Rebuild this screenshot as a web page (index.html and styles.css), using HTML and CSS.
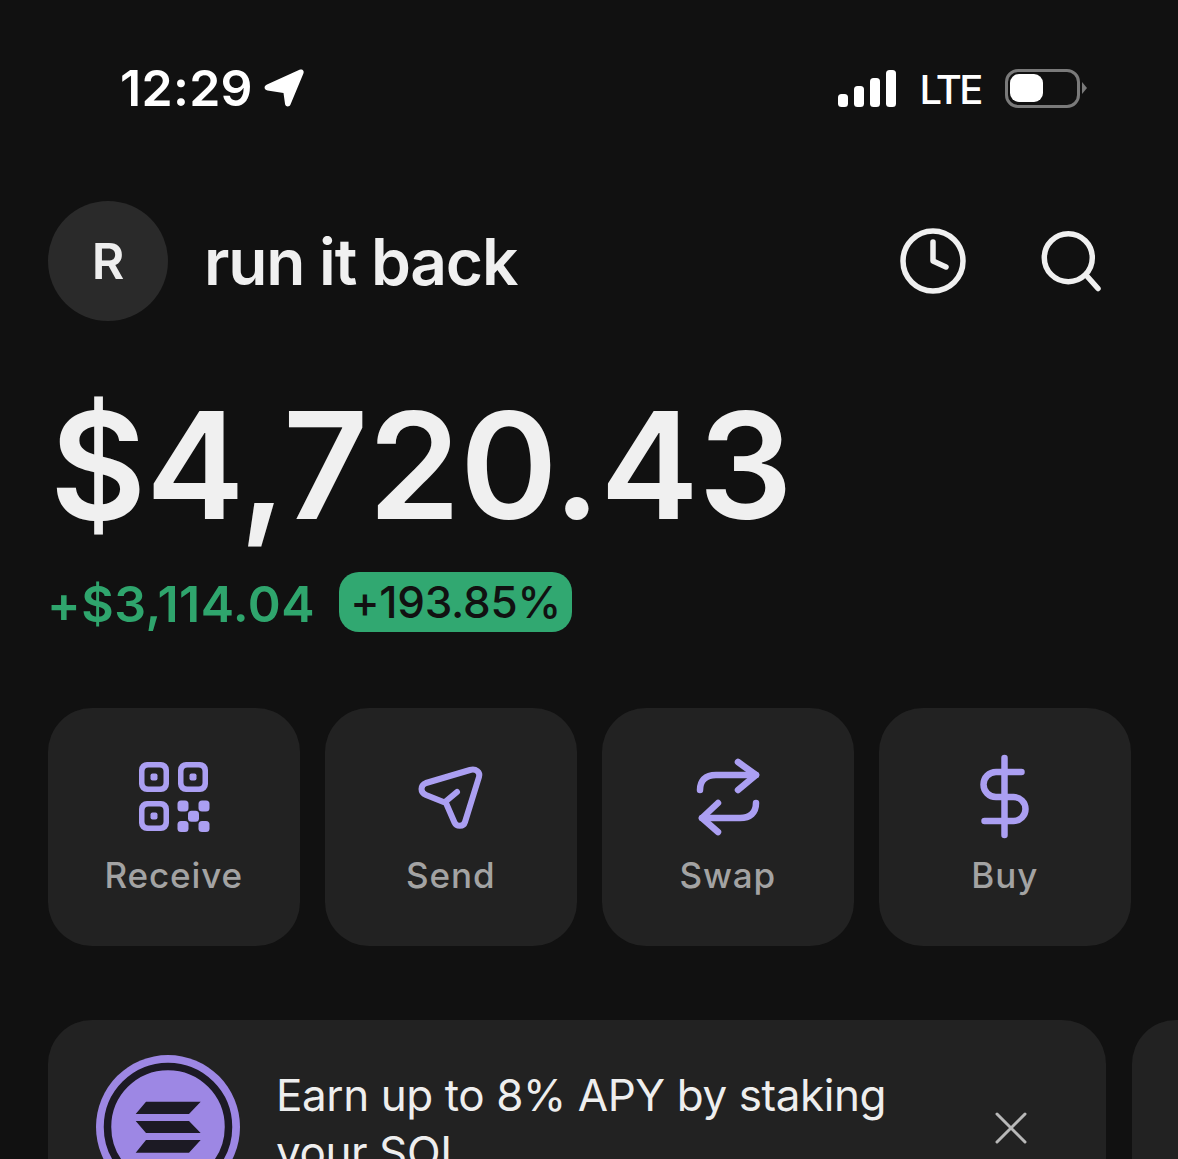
FILE: index.html
```html
<!DOCTYPE html>
<html lang="en">
<head>
    <meta charset="UTF-8">
    <title>Wallet</title>
    <link rel="stylesheet" href="styles.css">
</head>
<body>

<div class="status-bar">
    <div class="status-left">
        <span class="time">12:29</span>
        <svg class="location" width="42" height="42" viewBox="0 0 42 42"><path d="M36.500 2.700 C39.500 1.600 41.500 3.800 40.400 6.400 L27.500 37.500 C26.300 40.500 22.300 40 22 36.800 L20.500 26 L4.500 23.500 C1 22.800 0.500 19 4 17.500 Z" fill="#fff"/></svg>
    </div>
    <div class="status-right">
        <div class="signal">
            <span class="bar bar-1"></span>
            <span class="bar bar-2"></span>
            <span class="bar bar-3"></span>
            <span class="bar bar-4"></span>
        </div>
        <span class="network">LTE</span>
        <div class="battery">
            <div class="battery-body"><div class="battery-level"></div></div>
            <div class="battery-cap"></div>
        </div>
    </div>
</div>

<div class="header">
    <div class="avatar">R</div>
    <div class="account-name">run it back</div>
    <div class="header-icons">
        <svg width="68" height="68" viewBox="0 0 68 68" fill="none" stroke="#f0f0f0" stroke-width="5.500" stroke-linecap="round" stroke-linejoin="round">
            <circle cx="34" cy="34" r="30"/>
            <path d="M34 15 V34 L47 40"/>
        </svg>
        <svg width="64" height="64" viewBox="0 0 64 64" fill="none" stroke="#f0f0f0" stroke-width="5.500" stroke-linecap="round">
            <circle cx="28.300" cy="28.700" r="24"/>
            <path d="M46 46 L58 59.500"/>
        </svg>
    </div>
</div>

<div class="balance">$4,720.43</div>

<div class="change">
    <span class="change-amount">+$3,114.04</span>
    <span class="change-pill">+193.85%</span>
</div>

<div class="actions">
    <div class="action">
        <svg class="action-icon" width="72" height="72" viewBox="0 0 72 72" fill="#ab9ff2">
            <path fill-rule="evenodd" d="M9 1 H23 A8 8 0 0 1 31 9 V23 A8 8 0 0 1 23 31 H9 A8 8 0 0 1 1 23 V9 A8 8 0 0 1 9 1 Z M10.500 6.500 A4 4 0 0 0 6.500 10.500 V21.500 A4 4 0 0 0 10.500 25.500 H21.500 A4 4 0 0 0 25.500 21.500 V10.500 A4 4 0 0 0 21.500 6.500 Z"/>
            <rect x="12.500" y="12.500" width="7" height="7" rx="2"/>
            <path fill-rule="evenodd" d="M48 1 H62 A8 8 0 0 1 70 9 V23 A8 8 0 0 1 62 31 H48 A8 8 0 0 1 40 23 V9 A8 8 0 0 1 48 1 Z M49.500 6.500 A4 4 0 0 0 45.500 10.500 V21.500 A4 4 0 0 0 49.500 25.500 H60.500 A4 4 0 0 0 64.500 21.500 V10.500 A4 4 0 0 0 60.500 6.500 Z"/>
            <rect x="51.500" y="12.500" width="7" height="7" rx="2"/>
            <path fill-rule="evenodd" d="M9 40 H23 A8 8 0 0 1 31 48 V62 A8 8 0 0 1 23 70 H9 A8 8 0 0 1 1 62 V48 A8 8 0 0 1 9 40 Z M10.500 45.500 A4 4 0 0 0 6.500 49.500 V60.500 A4 4 0 0 0 10.500 64.500 H21.500 A4 4 0 0 0 25.500 60.500 V49.500 A4 4 0 0 0 21.500 45.500 Z"/>
            <rect x="12.500" y="51.500" width="7" height="7" rx="2"/>
            <rect x="39.500" y="39.500" width="11" height="11" rx="3.500"/>
            <rect x="60.500" y="39.500" width="11" height="11" rx="3.500"/>
            <rect x="50" y="49.700" width="11" height="11" rx="3.500"/>
            <rect x="39.500" y="60" width="11" height="11" rx="3.500"/>
            <rect x="60.500" y="60" width="11" height="11" rx="3.500"/>
        </svg>
        <span class="action-label">Receive</span>
    </div>
    <div class="action">
        <svg class="action-icon" width="72" height="72" viewBox="0 0 72 72" fill="none" stroke="#ab9ff2" stroke-width="6" stroke-linecap="round" stroke-linejoin="round">
            <path d="M11 22 L55 9 C61 7.500 65.500 11 64 16 L50 61 C48.500 66 41.500 66 39.500 61.500 L31 42 L11 34 C5 31.500 5 24.500 11 22 Z"/>
            <path d="M30 41 L42 31"/>
        </svg>
        <span class="action-label">Send</span>
    </div>
    <div class="action">
        <svg class="action-icon" width="72" height="72" viewBox="0 0 72 72" fill="none" stroke="#ab9ff2" stroke-width="6.500" stroke-linecap="round" stroke-linejoin="round">
            <path d="M8 29 C8 20 13 14 24 14 H64"/>
            <path d="M46 1 L64 14 L46 29"/>
            <path d="M64 42 C64 52 58 57 48 57 H10"/>
            <path d="M26 42 L10 57 L26 71"/>
        </svg>
        <span class="action-label">Swap</span>
    </div>
    <div class="action">
        <svg class="action-icon" width="72" height="72" viewBox="0 0 72 72" fill="none" stroke="#ab9ff2" stroke-width="6.500" stroke-linecap="round" stroke-linejoin="round">
            <path d="M35.500 -3 V74"/>
            <path d="M52.500 11 H27 A12.500 12.500 0 0 0 27 36 H44.500 A12 12 0 0 1 44.500 60 H15.500"/>
        </svg>
        <span class="action-label">Buy</span>
    </div>
</div>

<div class="cards">
    <div class="card">
        <div class="sol-icon">
            <svg width="144" height="144" viewBox="0 0 144 144">
                <circle cx="72" cy="72" r="72" fill="#9d87e4"/>
                <circle cx="72" cy="72" r="60.500" fill="none" stroke="#1c1a24" stroke-width="7.500"/>
                <path d="M50 46.700 H104.700 L93 59 H39.700 Z M39.700 66 H93 L104.700 78 H50 Z M50 85 H104.700 L93 97.700 H39.700 Z" fill="#1c1a24"/>
            </svg>
        </div>
        <div class="card-text">Earn up to 8% APY by staking your SOL</div>
        <svg class="card-close" width="34" height="34" viewBox="0 0 34 34" stroke="#b8b8b8" stroke-width="3" stroke-linecap="round">
            <path d="M3 3 L31 31 M31 3 L3 31"/>
        </svg>
    </div>
    <div class="card"></div>
</div>

</body>
</html>
```

FILE: styles.css
```css
body {
    margin: 0;
    width: 1178px;
    height: 1159px;
    overflow: hidden;
    background: #111111;
    color: #f0f0f0;
    font-family: Inter, "Liberation Sans", sans-serif;
}
.status-bar {
    display: flex;
    justify-content: space-between;
    align-items: center;
    height: 60px;
    padding: 58px 91px 0 120px;
}
.status-left {
    display: flex;
    align-items: center;
    gap: 10px;
}
.time {
    font-size: 50px;
    font-weight: 600;
    color: #ffffff;
    letter-spacing: 0.3px;
}
.status-right {
    display: flex;
    align-items: center;
}
.signal {
    display: flex;
    align-items: flex-end;
    gap: 6px;
}
.bar {
    width: 10px;
    background: #ffffff;
    border-radius: 3.5px;
}
.bar-1 { height: 13px; }
.bar-2 { height: 21px; }
.bar-3 { height: 29px; }
.bar-4 { height: 37px; }
.network {
    margin-left: 23px;
    padding-top: 2px;
    font-size: 40px;
    font-weight: 500;
    color: #ffffff;
    letter-spacing: -2.5px;
}
.battery {
    display: flex;
    align-items: center;
    margin-left: 24px;
}
.battery-body {
    box-sizing: border-box;
    width: 75px;
    height: 39px;
    border: 3px solid #7a7a7a;
    border-radius: 13px;
    padding: 2px;
}
.battery-level {
    width: 33px;
    height: 28px;
    background: #ffffff;
    border-radius: 9px;
}
.battery-cap {
    width: 0;
    height: 0;
    margin-left: 2px;
    border-left: 5px solid #7a7a7a;
    border-top: 6px solid transparent;
    border-bottom: 6px solid transparent;
}
.header {
    display: flex;
    align-items: center;
    margin-top: 83px;
    padding: 0 74px 0 48px;
}
.avatar {
    display: flex;
    align-items: center;
    justify-content: center;
    width: 120px;
    height: 120px;
    border-radius: 50%;
    background: #2a2a2a;
    font-size: 50px;
    font-weight: 600;
    color: #eeeeee;
}
.account-name {
    margin-left: 36px;
    font-size: 64px;
    font-weight: 600;
    letter-spacing: -1.2px;
}
.header-icons {
    display: flex;
    align-items: center;
    gap: 73px;
    margin-left: auto;
}
.balance {
    margin: 54px 0 0 50px;
    font-size: 148px;
    font-weight: 600;
    line-height: 182px;
    letter-spacing: -0.25px;
    color: #f0f0f0;
}
.change {
    display: flex;
    align-items: center;
    gap: 24px;
    height: 60px;
    margin: 15px 0 0 47px;
}
.change-amount {
    padding-top: 3px;
    font-size: 50px;
    font-weight: 600;
    letter-spacing: 0.5px;
    color: #2fa56d;
}
.change-pill {
    padding: 0 11px;
    height: 60px;
    line-height: 60px;
    border-radius: 20px;
    background: #31a871;
    color: #111111;
    font-size: 44px;
    font-weight: 500;
    letter-spacing: -0.25px;
}
.actions {
    display: flex;
    gap: 25.5px;
    margin: 76px 0 0 48px;
}
.action {
    display: flex;
    flex-direction: column;
    align-items: center;
    box-sizing: border-box;
    width: 251.5px;
    height: 238px;
    padding-top: 53px;
    border-radius: 44px;
    background: #222222;
}
.action-icon {
    overflow: visible;
}
.action-label {
    margin-top: 21px;
    font-size: 35px;
    line-height: 42px;
    font-weight: 500;
    color: #a3a3a3;
    letter-spacing: 0.9px;
}
.cards {
    display: flex;
    gap: 26px;
    margin: 74px 0 0 48px;
}
.card {
    flex: none;
    display: flex;
    align-items: flex-start;
    box-sizing: border-box;
    width: 1058px;
    height: 214px;
    border-radius: 44px;
    background: #222222;
    padding: 35px 0 0 48px;
}
.sol-icon {
    flex: none;
    width: 144px;
    height: 144px;
}
.card-text {
    width: 660px;
    margin: 12px 0 0 36px;
    font-size: 44px;
    line-height: 57px;
    letter-spacing: -0.42px;
    color: #eeeeee;
}
.card-close {
    flex: none;
    margin: 56px 0 0 58px;
}
```
